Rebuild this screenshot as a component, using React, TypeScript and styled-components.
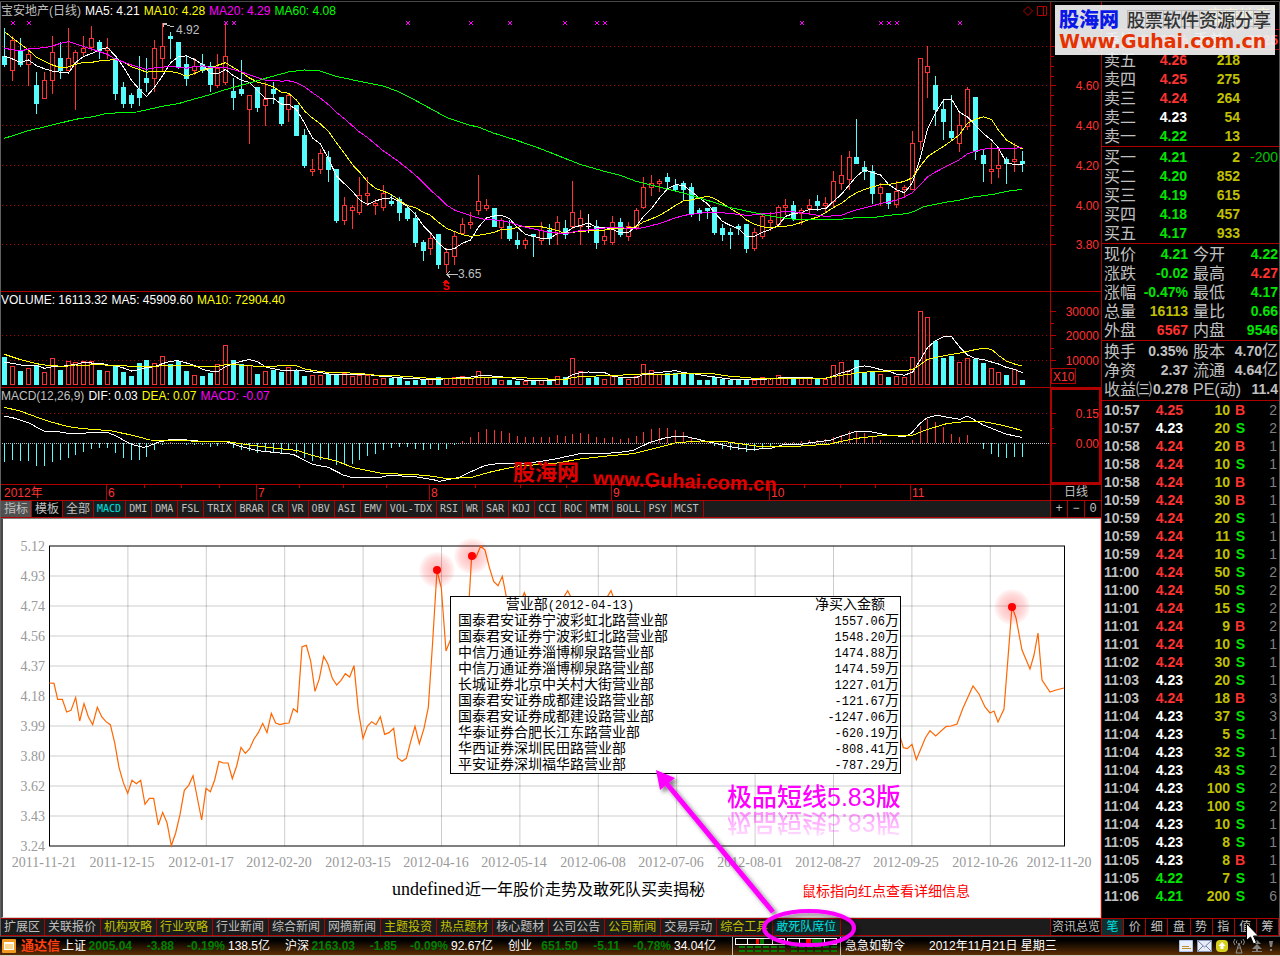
import React from "react";
import styled, { createGlobalStyle } from "styled-components";

const RED = "#ff3232";
const LINE = "#b00000";
const GREEN = "#00e600";
const YELLOW = "#c0c000";
const GREY = "#c0c0c0";
const CYAN = "#54fcfc";
const SANS = `"Liberation Sans", "Noto Sans CJK SC", sans-serif`;
const MONO = `"Liberation Mono", "Noto Sans CJK SC", monospace`;
const SERIF = `"Liberation Serif", "Noto Sans CJK SC", serif`;

const GlobalStyle = createGlobalStyle`
  * { box-sizing: border-box; }
  body { margin: 0; background: #000; font-family: ${SANS}; font-size: 12px; color: ${GREY}; }
  button { font: inherit; color: inherit; background: none; border: 0; padding: 0; margin: 0; cursor: pointer; }
  table { border-collapse: collapse; border-spacing: 0; }
  td, th { padding: 0; font-weight: inherit; text-align: left; }
  svg { display: block; }
`;

/* ---------- market data: screen levels in thirds of a pixel ---------- */

const CANDLES =
  "d84,168,195,201 u108,121,212,243 d114,150,195,201 u150,163,194,258 d216,255,312,342 u216,240,298,298 u108,157,242,281 d127,174,212,237 u84,175,212,212 u150,157,188,330 u108,145,158,170 u78,115,145,152 d120,126,152,177 u114,145,152,177 d174,175,282,300 d246,261,312,324 d279,285,312,324 d168,267,293,318 d174,234,249,276 u120,145,236,276 u69,139,176,212 d96,108,117,177 d126,126,200,207 d168,192,237,258 u175,199,212,224 d162,192,213,219 d186,198,255,276 u162,206,257,264 u72,169,248,255 d233,273,293,330 d180,267,282,288 u285,286,329,432 d261,261,324,336 u246,298,318,378 d246,267,282,312 d291,291,372,378 u282,286,329,366 d315,315,408,408 d387,405,498,504 u477,508,515,528 u447,460,510,522 d453,471,510,546 d507,507,663,669 u591,616,662,675 u615,622,632,687 u531,586,638,645 u531,580,587,618 u597,610,617,645 u555,580,623,633 d585,603,612,618 d591,597,639,663 d615,624,657,663 d636,654,729,741 d720,726,753,783 u697,715,746,765 d702,702,795,807 u745,757,794,820 u697,709,770,795 u654,672,703,705 u636,667,674,687 u525,604,632,645 u597,616,626,633 d624,624,681,681 u654,661,685,717 d660,678,717,723 d696,720,735,747 u714,721,734,747 d702,702,711,771 u666,691,722,735 d672,690,717,735 u648,667,703,735 d660,684,705,717 u543,637,680,687 u630,655,680,735 w642,678,681,699 d660,678,729,747 u684,709,722,735 u648,667,728,735 d654,666,705,711 u666,679,710,723 u624,631,685,690 u531,562,623,627 u525,550,563,588 u537,544,551,576 d519,531,546,570 d537,555,570,573 d543,549,570,603 d549,561,643,651 d624,630,641,663 d624,624,633,657 d621,621,699,705 d672,684,705,723 d684,696,705,747 d672,678,687,705 d672,672,747,759 u684,697,746,753 u645,649,710,717 u636,661,668,693 u615,622,674,681 u597,616,622,645 d603,615,657,663 u624,631,643,675 u597,616,628,645 d585,603,618,633 u591,610,617,639 u513,544,605,621 u465,526,551,570 u453,472,539,570 d357,471,492,492 d483,501,516,540 d495,513,582,612 u549,562,581,618 d579,579,612,627 u543,574,616,624 u555,562,569,594 u393,430,569,569 u175,175,425,450 u138,199,218,294 d228,255,330,378 d303,327,366,420 d285,393,414,423 u333,376,431,456 u261,268,382,390 d291,291,456,480 d447,465,492,546 u429,508,515,552 u447,496,508,534 d471,477,492,552 u429,478,485,516 d453,483,492,516"
    .split(" ")
    .map((s) => {
      const [high, top, bottom, low] = s.slice(1).split(",").map(Number);
      return { kind: s[0], high, top, bottom, low };
    });

const VOLUMES = [
  216, 243, 258, 249, 240, 261, 219, 255, 228, 231, 228, 228, 255, 258, 243, 261, 273, 234, 225, 234, 213, 237, 228, 258, 270, 273, 264, 237, 180, 225, 237, 240, 267, 258, 255, 260, 246, 255, 273, 270, 270, 267, 267, 264, 273, 270, 270, 282, 279, 279, 277, 288, 284, 285,
  282, 276, 279, 276, 273, 278, 258, 276, 282, 285, 285, 288, 288, 286, 286, 289, 273, 276, 219, 258, 279, 275, 282, 273, 278, 282, 272, 237, 255, 267, 264, 263, 266, 268, 285, 285, 276, 282, 284, 284, 285, 284, 276, 279, 270, 280, 280, 280, 280, 282, 282, 240, 231, 255,
  225, 262, 260, 267, 276, 273, 276, 216, 78, 96, 168, 219, 213, 231, 219, 222, 234, 249, 261, 270, 252, 285,
];

const HISTOGRAM = [
  531, 525, 528, 528, 543, 543, 531, 525, 519, 510, 501, 492, 489, 489, 504, 519, 525, 525, 516, 495, 480, 472, 475, 480, 480, 480, 486, 484, 475, 489, 495, 498, 504, 501, 501, 504, 495, 504, 519, 528, 525, 525, 540, 540, 537, 525, 513, 507, 495, 489, 486, 486, 492, 495,
  492, 495, 492, 480, 467, 456, 441, 432, 435, 438, 444, 453, 456, 456, 456, 456, 450, 453, 447, 444, 447, 456, 459, 456, 462, 459, 453, 441, 432, 429, 429, 435, 441, 456, 468, 472, 483, 492, 495, 495, 501, 498, 489, 483, 478, 471, 471, 468, 465, 465, 462, 456, 450, 438,
  438, 444, 456, 465, 475, 475, 475, 465, 423, 402, 411, 426, 447, 456, 450, 475, 492, 507, 516, 519, 516, 516,
];

const MA60 =
  "13,415 85,392 157,375 226,358 274,351 322,340 410,336 487,319 535,311 583,297 631,284 676,269 748,249 796,235 865,216 913,210 961,213 1009,229 1078,244 1150,258 1198,276 1246,301 1290,325 1339,352 1411,376 1435,381 1480,399 1550,421 1624,447 1740,493 1813,514 1861,526 1906,543 2050,579 2119,600 2191,623 2263,638 2320,650 2400,660 2530,657 2569,653 2625,652 2665,646 2720,641 2740,635 2770,620 2830,608 2880,600 2920,591 2980,583 3020,574 3067,568";
const DIF =
  "13,393 37,398 85,413 133,439 181,441 205,445 250,445 274,442 322,442 346,452 394,478 430,487 445,484 470,473 511,463 540,463 595,468 680,471 724,485 772,497 880,508 937,538 985,547 1030,570 1054,577 1140,578 1165,571 1246,575 1300,584 1317,589 1375,578 1400,566 1456,541 1500,535 1590,534 1660,523 1740,506 1820,505 1860,502 1900,496 1950,472 2002,457 2050,453 2090,462 2145,475 2200,487 2245,493 2263,493 2315,489 2350,479 2404,478 2430,473 2490,466 2520,455 2565,440 2610,440 2660,450 2715,455 2734,445 2760,415 2782,398 2810,391 2880,403 2902,393 2950,420 3017,447 3065,457";
const DEA =
  "13,367 60,378 109,396 157,412 205,425 250,431 330,437 394,450 450,465 690,471 748,480 830,490 890,496 940,512 1009,528 1060,548 1150,566 1235,568 1300,574 1340,581 1415,577 1475,560 1555,543 1660,536 1740,522 1820,513 1900,506 1980,486 2030,473 2100,468 2170,469 2220,476 2280,485 2390,484 2490,477 2520,470 2570,460 2640,452 2735,452 2780,434 2840,416 2900,409 2950,410 3000,419 3065,436";
const YEAR_LINE =
  "148,489 162,490 173,538 187,538 200,576 213,571 227,533 239,603 252,551 265,590 278,614 292,562 305,590 318,605 331,614 344,668 357,742 370,788 383,820 396,781 409,791 422,781 435,853 448,835 461,835 475,915 488,877 501,908 514,977 527,939 540,884 553,811 566,796 579,767 592,834 605,900 618,805 631,815 644,780 657,724 670,729 684,729 697,776 710,738 723,682 736,700 749,686 762,657 775,638 788,610 801,638 814,580 827,609 840,614 854,610 867,609 880,566 892,576 906,380 919,376 932,423 945,514 958,476 971,409 984,433 997,475 1010,495 1023,481 1036,461 1049,471 1062,437 1075,571 1089,655 1102,619 1115,605 1128,614 1141,590 1154,643 1167,638 1181,625 1193,714 1206,724 1219,715 1232,665 1245,619 1258,671 1272,625 1285,562 1298,365 1311,151 1324,204 1338,393 1351,360 1390,420 1402,320 1408,228 1415,107 1428,112 1442,78 1455,90 1468,142 1481,184 1494,197 1507,169 1520,235 1560,250 1573,218 1586,250 1680,250 1703,212 1722,250 1810,250 1833,212 1850,260 2300,500 2690,600 2702,655 2710,683 2722,686 2736,673 2749,719 2776,654 2790,632 2807,648 2838,620 2853,618 2871,612 2889,564 2904,531 2919,498 2937,522 2955,561 2970,579 2982,573 2994,606 3012,567 3036,260 3048,294 3066,390 3090,447 3102,405 3114,339 3126,480 3150,516 3168,510 3192,504";

const candleX = (i: number) => 3 + Math.ceil((71 * i) / 9);

const toPoints = (src: string, dx: number, dy: number) =>
  src
    .split(" ")
    .map((p) => {
      const [x, y] = p.split(",").map(Number);
      return `${x / 3 + dx},${y / 3 + dy}`;
    })
    .join(" ");

const average = (values: number[], n: number, lead: number[]) =>
  values.map((_, i) =>
    i < n - 1 ? lead[i] : values.slice(i - n + 1, i + 1).reduce((a, b) => a + b, 0) / n
  );

const seriesPoints = (values: number[], dy: number) =>
  values.map((v, i) => `${candleX(i) + 0.5},${v / 3 + dy}`).join(" ");

const CLOSES = CANDLES.map((c) => (c.kind === "u" ? c.top : c.bottom));
const MA5 = average(CLOSES, 5, [168, 177, 187, 180]);
const MA10 = average(CLOSES, 10, [95, 114, 132, 150, 172, 184, 195, 203, 201]);
const MA20 = average(CLOSES, 20, [145, 149, 153, 147, 145, 143, 138, 130, 125, 131, 140, 147, 155, 163, 178, 186, 195, 202, 208]);
const VMA5 = average(VOLUMES, 5, [232, 235, 240, 243]);
const VMA10 = average(VOLUMES, 10, [208, 216, 224, 230, 236, 240, 241, 244, 243]);

/* ---------- shell ---------- */

const Page = styled.div`
  position: relative;
  display: flex;
  flex-direction: column;
  min-width: 1280px;
  padding-top: 1px;
  background: #000;
  overflow: hidden;
`;
const Workspace = styled.div`
  display: flex;
  align-items: stretch;
  border-top: 1px solid #484848;
`;
const Main = styled.main`
  flex: 1;
  min-width: 0;
  display: flex;
  flex-direction: column;
  border-left: 1px solid #606060;
`;
const Pane = styled.section`
  display: grid;
  grid-template-columns: 1fr 51px;
  border-bottom: 1px solid ${LINE};
`;
const Plot = styled.div`
  min-width: 0;
  overflow: hidden;
`;
const PaneHead = styled.header<{ $h: number }>`
  display: flex;
  align-items: center;
  gap: 4px;
  height: ${(p) => p.$h}px;
  padding-right: 3px;
  white-space: nowrap;
  line-height: 16px;
`;
const HeadIcons = styled.span`
  margin-left: auto;
`;
const Tone = styled.span<{ $c: string }>`
  color: ${(p) => p.$c};
`;
const Axis = styled.div<{ $strong?: boolean }>`
  border-left: 1px solid ${LINE};
  ${(p) => p.$strong && `outline: 2px solid ${LINE}; outline-offset: -2px;`}
`;
const AxisCaption = styled.div`
  display: flex;
  align-items: center;
  justify-content: center;
  border-left: 1px solid ${LINE};
  line-height: 15px;
`;
const SvgText = styled.text<{ $size?: number; $serif?: boolean }>`
  font-family: ${(p) => (p.$serif ? SERIF : SANS)};
  font-size: ${(p) => p.$size ?? 12}px;
`;

/* ---------- candlestick, volume and MACD panes ---------- */

const Dots = ({ y }: { y: number }) => (
  <line x1="1" x2="100%" y1={y + 0.5} y2={y + 0.5} stroke="#b00000" strokeDasharray="1 3" />
);
const Curve = ({ points, color }: { points: string; color: string }) => (
  <polyline points={points} fill="none" stroke={color} shapeRendering="crispEdges" />
);

const CROSSES = [13, 29, 226, 234, 408, 471, 510, 565, 597, 605, 802, 881, 889, 897, 960];

const PricePlot = () => (
  <svg width="100%" height="271" shapeRendering="crispEdges" role="img" aria-label="日线">
    <g transform="translate(0,-20)">
      {[46, 85, 125, 165, 205, 244].map((y) => <Dots key={y} y={y} />)}
      {CROSSES.map((x) => (
        <path key={x} d={`M${x - 3},21l4,4m0,-4l-4,4`} stroke="#ff00ff" strokeWidth="1" shapeRendering="auto" />
      ))}
      {CANDLES.map((c, i) => {
        const x = candleX(i);
        const high = Math.round(c.high / 3);
        const top = Math.floor(c.top / 3);
        const bottom = Math.max(Math.round(c.bottom / 3), top + 1);
        const low = Math.max(Math.round(c.low / 3), bottom);
        if (c.kind === "u") {
          return (
            <g key={i} stroke={RED} fill="none">
              {top > high && <line x1={x + 0.5} x2={x + 0.5} y1={high} y2={top} />}
              {low > bottom && <line x1={x + 0.5} x2={x + 0.5} y1={bottom} y2={low} />}
              <rect x={x - 1.5} y={top + 0.5} width="4" height={Math.max(bottom - top - 1, 2)} />
            </g>
          );
        }
        const fill = c.kind === "w" ? "#fff" : CYAN;
        return (
          <g key={i} fill={fill}>
            <rect x={x} y={high} width="1" height={low - high} />
            <rect x={x - 2} y={top} width="5" height={bottom - top} />
          </g>
        );
      })}
      <Curve points={seriesPoints(MA5, 0)} color="#fff" />
      <Curve points={seriesPoints(MA10, 0)} color="#ffff00" />
      <Curve points={seriesPoints(MA20, 0)} color="#ff00ff" />
      <Curve points={toPoints(MA60, -1, 0)} color="#00ff00" />
      <path d="M173,27L162,24M162,27v-4h4" stroke={GREY} fill="none" />
      <SvgText x="175" y="34" fill={GREY}>4.92</SvgText>
      <path d="M457,274.5h-11M449,271l-3,3.5l3,3" stroke={GREY} fill="none" />
      <SvgText x="457" y="278" fill={GREY}>3.65</SvgText>
      <path d="M442,283l3,-4l3,4z" fill="#ff0000" />
      <SvgText x="442" y="290" fill="#ff0000" fontWeight="bold" $size={10}>S</SvgText>
    </g>
  </svg>
);

const AxisScale = ({ height, labels, ticks }: { height: number; labels: [number, string][]; ticks: number[] }) => (
  <svg width="50" height={height}>
    {ticks.map((y) => <line key={y} x1="0" x2="3" y1={y + 0.5} y2={y + 0.5} stroke={LINE} />)}
    {labels.map(([y, t]) => (
      <g key={t}>
        <line x1="0" x2="5" y1={y + 0.5} y2={y + 0.5} stroke={LINE} />
        <SvgText x="48" y={y + 5} textAnchor="end" fill={RED}>{t}</SvgText>
      </g>
    ))}
  </svg>
);

const VolumePlot = () => (
  <svg width="100%" height="79" shapeRendering="crispEdges">
    <Dots y={27} />
    <Dots y={52} />
    {VOLUMES.map((v, i) => {
      const x = candleX(i);
      const top = Math.round(v / 3) - 23;
      return CANDLES[i].kind === "u" ? (
        <rect key={i} x={x - 1.5} y={top + 0.5} width="4" height={76 - top} fill="none" stroke={RED} />
      ) : (
        <rect key={i} x={x - 2} y={top} width="5" height={77 - top} fill={CYAN} />
      );
    })}
    <Curve points={seriesPoints(VMA5, -23)} color="#fff" />
    <Curve points={seriesPoints(VMA10, -23)} color="#ffff00" />
  </svg>
);

const MacdPlot = () => (
  <svg width="100%" height="80" shapeRendering="crispEdges">
    <Dots y={9} />
    <line x1="1" x2="100%" y1="39.5" y2="39.5" stroke={GREY} strokeDasharray="1 1" />
    {HISTOGRAM.map((v, i) => {
      const end = Math.round(v / 3) - 119;
      const x = candleX(i);
      return end < 39 ? (
        <rect key={i} x={x} y={end} width="1" height={39 - end} fill={RED} />
      ) : (
        <rect key={i} x={x} y="39" width="1" height={end - 39} fill={CYAN} />
      );
    })}
    <Curve points={toPoints(DIF, -1, -119)} color="#fff" />
    <Curve points={toPoints(DEA, -1, -119)} color="#ffff00" />
  </svg>
);

const MONTHS: [number, string][] = [[105, "6"], [255, "7"], [428, "8"], [610, "9"], [768, "10"], [909, "11"]];

const Timeline = () => (
  <svg width="100%" height="15" shapeRendering="crispEdges">
    <SvgText x="3" y="12" fill={RED}>2012年</SvgText>
    {MONTHS.map(([x, t]) => (
      <g key={t}>
        <line x1={x + 0.5} x2={x + 0.5} y1="0" y2="15" stroke={LINE} />
        <SvgText x={x + 2} y="12" fill={RED}>{t}</SvgText>
      </g>
    ))}
    {[143, 180, 218, 298, 342, 385, 474, 519, 565, 650, 690, 730, 803, 839, 874].map((x) => (
      <line key={x} x1={x + 0.5} x2={x + 0.5} y1="0" y2="3" stroke={LINE} />
    ))}
  </svg>
);

/* ---------- tab strips ---------- */

const TabStrip = styled.nav`
  display: flex;
  height: 17px;
  background: #1c1c1c;
  border-bottom: 1px solid ${LINE};
`;
const IndicatorTab = styled.button<{ $wide?: boolean; $bg?: string; $c?: string }>`
  padding: 0 ${(p) => (p.$wide ? 3 : 4)}px 0 3px;
  border-right: 1px solid ${LINE};
  background: ${(p) => p.$bg ?? "#1c1c1c"};
  color: ${(p) => p.$c ?? GREY};
  font-family: ${(p) => (p.$wide ? SANS : `"DejaVu Sans Mono", monospace`)};
  font-size: ${(p) => (p.$wide ? 12 : 10)}px;
  line-height: 16px;
  white-space: nowrap;
`;
const ZoomKeys = styled.div`
  display: grid;
  grid-template-columns: repeat(3, 1fr);
  width: 51px;
  margin-left: auto;
  background: #000;
`;
const ZoomKey = styled.button`
  border-left: 1px solid ${LINE};
  line-height: 15px;
  font-family: ${MONO};
  font-size: 12px;
`;
const NewsStrip = styled(TabStrip)`
  height: 18px;
  border-top: 1px solid ${LINE};
`;
const NewsTab = styled.button<{ $tone?: "hot" | "on" }>`
  padding: 0 4px 0 3px;
  border-right: 1px solid ${LINE};
  background: ${(p) => (p.$tone === "on" ? "#102828" : "#1c1c1c")};
  color: ${(p) => (p.$tone === "hot" ? YELLOW : p.$tone === "on" ? "#00e0e0" : GREY)};
  line-height: 16px;
  white-space: nowrap;
`;
const OverviewTab = styled(NewsTab)`
  margin-left: auto;
  padding: 0 1px;
  border-left: 1px solid ${LINE};
  border-right: 0;
  background: #000;
`;

const INDICATORS = "MACD DMI DMA FSL TRIX BRAR CR VR OBV ASI EMV VOL-TDX RSI WR SAR KDJ CCI ROC MTM BOLL PSY MCST".split(" ");
const NEWS: [string, ("hot" | "on")?][] = [
  ["扩展区"], ["关联报价"], ["机构攻略", "hot"], ["行业攻略", "hot"], ["行业新闻"], ["综合新闻"], ["网摘新闻"],
  ["主题投资", "hot"], ["热点题材", "hot"], ["核心题材"], ["公司公告"], ["公司新闻", "hot"], ["交易异动"],
  ["综合工具", "hot"], ["敢死队席位", "on"],
];

/* ---------- year chart ---------- */

const Report = styled.section`
  position: relative;
  height: 400px;
  background: #fff;
  border-style: solid;
  border-width: 1px 1px 1px 2px;
  border-color: #808080 #d4d0c8 #d4d0c8 #484848;
  overflow: hidden;
`;
const Popup = styled.div`
  position: absolute;
  left: 447px;
  top: 77px;
  width: 451px;
  padding-left: 7px;
  background: #fff;
  border: 1px solid #000;
  color: #000;
`;
const SeatTable = styled.table`
  width: 100%;
  font-family: ${MONO};
  font-size: 14px;
  line-height: 16px;
  td, th { height: 16px; white-space: nowrap; }
  th:first-child { width: 224px; text-align: center; }
  th:last-child { text-align: right; padding-right: 15px; }
  td:last-child { text-align: right; padding-right: 1px; }
`;
const Latin = styled.span`
  font-size: 12px;
  line-height: 1px;
`;
const Promo = styled.div`
  position: absolute;
  left: 724px;
  top: 263px;
  color: #ff00ff;
  font: 500 25px/26px "Noto Sans CJK SC", sans-serif;
  white-space: nowrap;
  -webkit-box-reflect: below 4px linear-gradient(rgba(0, 0, 0, 0.1), rgba(0, 0, 0, 0.45));
`;
const PromoDigits = styled.span`
  font-family: ${SANS};
  line-height: 1px;
`;

const SEATS: [string, string][] = [
  ["国泰君安证券宁波彩虹北路营业部", "1557.06"],
  ["国泰君安证券宁波彩虹北路营业部", "1548.20"],
  ["中信万通证券淄博柳泉路营业部", "1474.88"],
  ["中信万通证券淄博柳泉路营业部", "1474.59"],
  ["长城证券北京中关村大街营业部", "1227.01"],
  ["国泰君安证券成都建设路营业部", "-121.67"],
  ["国泰君安证券成都建设路营业部", "-1247.06"],
  ["华泰证券合肥长江东路营业部", "-620.19"],
  ["华西证券深圳民田路营业部", "-808.41"],
  ["平安证券深圳福华路营业部", "-787.29"],
];
const LEVELS = ["5.12", "4.93", "4.74", "4.56", "4.37", "4.18", "3.99", "3.80", "3.62", "3.43", "3.24"];
const DATES = ["2011-11-21", "2011-12-15", "2012-01-17", "2012-02-20", "2012-03-15", "2012-04-16", "2012-05-14", "2012-06-08", "2012-07-06", "2012-08-01", "2012-08-27", "2012-09-25", "2012-10-26"];

const YearChart = () => (
  <svg width="100%" height="398">
    <defs>
      <radialGradient id="halo">
        <stop offset="0.2" stopColor="#f00" stopOpacity="0.25" />
        <stop offset="0.7" stopColor="#f00" stopOpacity="0.14" />
        <stop offset="1" stopColor="#f00" stopOpacity="0.02" />
      </radialGradient>
    </defs>
    <g transform="translate(-3,-519)">
      {LEVELS.slice(1, -1).map((t, i) => (
        <line key={t} x1="50" x2="1064" y1={576 + i * 30} y2={576 + i * 30} stroke="#000" strokeOpacity="0.2" />
      ))}
      {DATES.slice(1).map((t, i) => (
        <line key={t} x1={49.5 + (i + 1) * 78.4} x2={49.5 + (i + 1) * 78.4} y1="546" y2="846" stroke="#000" strokeOpacity="0.2" />
      ))}
      <rect x="49.5" y="546" width="1015" height="300" fill="none" stroke="#000" />
      {LEVELS.map((t, i) => (
        <SvgText key={t} $serif $size={14} x="45" y={551 + i * 30} textAnchor="end" fill="#999">{t}</SvgText>
      ))}
      {DATES.map((t, i) => (
        <SvgText key={t} $serif $size={14} x={Math.round(44 + i * 78.4)} y="867" textAnchor="middle" fill="#999">{t}</SvgText>
      ))}
      <SvgText $serif $size={14} x="1059" y="867" textAnchor="middle" fill="#999">2012-11-20</SvgText>
      <polyline points={toPoints(YEAR_LINE, 0, 520)} fill="none" stroke="#ff6600" strokeWidth="1.2" />
      {[[437, 570], [472, 556], [1012, 607]].map(([x, y]) => (
        <g key={x}>
          <circle cx={x} cy={y} r="18" fill="url(#halo)" />
          <circle cx={x} cy={y} r="4" fill="#f00" />
        </g>
      ))}
      <SvgText $serif $size={18} x="392" y="895" fill="#000">undefined</SvgText>
      <SvgText $size={16} x="465" y="895" fill="#000">近一年股价走势及敢死队买卖揭秘</SvgText>
      <SvgText $size={14} x="802" y="896" fill="#f00">鼠标指向红点查看详细信息</SvgText>
    </g>
  </svg>
);

/* ---------- quote sidebar ---------- */

const Sidebar = styled.aside`
  flex: none;
  display: flex;
  flex-direction: column;
  width: 179px;
  border-left: 1px solid ${LINE};
  border-right: 1px solid #585858;
`;
const QuoteTitle = styled.h1`
  margin: 0;
  height: 28px;
  padding: 0 8px;
  border-bottom: 1px solid ${LINE};
  color: #ffff00;
  font-size: 16px;
  font-weight: normal;
  line-height: 27px;
  text-align: right;
`;
const Block = styled.div<{ $bottom?: number }>`
  padding: 1px 1px ${(p) => p.$bottom ?? 0}px 2px;
  border-bottom: 1px solid ${LINE};
`;
const QuoteTable = styled.table<{ $row: number }>`
  width: 100%;
  table-layout: fixed;
  font-size: 14px;
  font-weight: bold;
  line-height: ${(p) => p.$row}px;
  td, th { height: ${(p) => p.$row}px; white-space: nowrap; }
`;
const Label = styled.th<{ $w?: number }>`
  width: ${(p) => p.$w ?? 32}px;
  font-size: 16px;
  font-weight: normal;
  color: ${GREY};
`;
const Num = styled.td<{ $c?: string; $w?: number; $thin?: boolean; $left?: boolean }>`
  width: ${(p) => (p.$w ? `${p.$w}px` : "auto")};
  color: ${(p) => p.$c ?? GREY};
  font-weight: ${(p) => (p.$thin ? "normal" : "bold")};
  ${(p) => !p.$left && "text-align: right;"}
`;
const SecondLabel = styled(Label)`
  width: 37px;
  padding-left: 5px;
`;
const Unit = styled.span`
  font-size: 16px;
  font-weight: normal;
  line-height: 1px;
`;
const SideTabs = styled.nav`
  display: grid;
  grid-template-columns: repeat(8, 1fr);
  height: 18px;
  margin-top: auto;
  border-top: 1px solid ${LINE};
  border-bottom: 1px solid ${LINE};
`;
const SideTab = styled.button<{ $on?: boolean }>`
  border-right: 1px solid ${LINE};
  background: ${(p) => (p.$on ? "#103030" : "#000")};
  color: ${(p) => (p.$on ? "#00e0e0" : GREY)};
  line-height: 16px;
`;

const ASKS = [["卖五", "4.26", RED, "218"], ["卖四", "4.25", RED, "275"], ["卖三", "4.24", RED, "264"], ["卖二", "4.23", "#fff", "54"], ["卖一", "4.22", GREEN, "13"]];
const BIDS = [["买一", "4.21", GREEN, "2", "-200"], ["买二", "4.20", GREEN, "852"], ["买三", "4.19", GREEN, "615"], ["买四", "4.18", GREEN, "457"], ["买五", "4.17", GREEN, "933"]];
const STATS = [
  ["现价", "4.21", GREEN, "今开", "4.22", GREEN],
  ["涨跌", "-0.02", GREEN, "最高", "4.27", RED],
  ["涨幅", "-0.47%", GREEN, "最低", "4.17", GREEN],
  ["总量", "16113", YELLOW, "量比", "0.66", GREEN],
  ["外盘", "6567", RED, "内盘", "9546", GREEN],
];
const FUNDAMENTALS = [
  ["换手", "0.35%", GREY, "股本", "4.70亿", GREY],
  ["净资", "2.37", GREY, "流通", "4.64亿", GREY],
  ["收益㈢", "0.278", GREY, "PE(动)", "11.4", GREY],
];
const TICKS =
  "10:57 4.25 10 B 2|10:57 4.23 20 S 2|10:58 4.24 20 B 1|10:58 4.24 10 S 1|10:58 4.24 10 B 1|10:59 4.24 30 B 1|10:59 4.24 20 S 1|10:59 4.24 11 S 1|10:59 4.24 10 S 1|11:00 4.24 50 S 2|11:00 4.24 50 S 2|11:01 4.24 15 S 2|11:01 4.24 9 B 2|11:01 4.24 10 S 1|11:02 4.24 30 S 1|11:03 4.23 20 S 1|11:03 4.24 18 B 3|11:04 4.23 37 S 3|11:04 4.23 5 S 1|11:04 4.23 32 S 1|11:04 4.23 43 S 2|11:04 4.23 100 S 2|11:04 4.23 100 S 2|11:04 4.23 10 S 1|11:05 4.23 8 S 1|11:05 4.23 8 B 1|11:05 4.22 7 S 1|11:06 4.21 200 S 6"
    .split("|")
    .map((r) => r.split(" "));
const priceColor = (p: string) => (p > "4.23" ? RED : p < "4.23" ? GREEN : "#fff");

const Depth = ({ rows }: { rows: string[][] }) => (
  <Block>
    <QuoteTable $row={19}>
      <tbody>
        {rows.map(([name, price, color, size, delta]) => (
          <tr key={name}>
            <Label scope="row" $w={40}>{name}</Label>
            <Num $w={43} $c={color}>{price}</Num>
            <Num $w={53} $c={YELLOW}>{size}</Num>
            <Num $c="#00c000" $thin>{delta}</Num>
          </tr>
        ))}
      </tbody>
    </QuoteTable>
  </Block>
);

const Figures = ({ rows, bottom }: { rows: string[][]; bottom?: number }) => (
  <Block $bottom={bottom}>
    <QuoteTable $row={19}>
      <tbody>
        {rows.map(([a, av, ac, b, bv, bc]) => (
          <tr key={a}>
            <Label scope="row">{a}</Label>
            <Num $w={52} $c={ac}>{av}</Num>
            <SecondLabel scope="row">{b}</SecondLabel>
            <Num $c={bc}>{bv.replace("亿", "")}{bv.endsWith("亿") && <Unit>亿</Unit>}</Num>
          </tr>
        ))}
      </tbody>
    </QuoteTable>
  </Block>
);

const TickBlock = styled.div`
  padding: 0 2px 12px;
`;
const OrderBalance = styled.div`
  height: 20px;
  overflow: hidden;
  border-bottom: 1px solid ${LINE};
`;

/* ---------- status bar ---------- */

const StatusBar = styled.footer`
  display: flex;
  align-items: center;
  height: 20px;
  border-top: 1px solid #484848;
  border-bottom: 1px solid #d4d0c8;
  background: linear-gradient(#000 20%, #5c2e04);
  color: #fff;
  line-height: 16px;
  white-space: nowrap;
`;
const Brand = styled.strong`
  width: 41px;
  margin: 0 0 0 4px;
  color: #ff4010;
  font-size: 13px;
`;
const IndexGroup = styled.div`
  display: grid;
  grid-template-columns: 24px 46px 42px 51px 45px;
  align-items: baseline;
  margin-right: 15px;
`;
const IndexValue = styled.span`
  color: #008000;
  font-weight: bold;
  text-align: right;
`;
const Amount = styled.span`
  text-align: right;
`;
const Meter = styled.div`
  margin-left: 1px;
  padding: 0 1px;
  border-left: 1px solid ${GREY};
  border-right: 1px solid ${GREY};
`;
const Motto = styled.span`
  width: 84px;
  margin-left: 4px;
`;
const Tray = styled.div`
  display: flex;
  align-items: center;
  gap: 4px;
  margin: 0 6px 0 auto;
`;

const INDEXES = [
  ["上证", "2005.04", "-3.88", "-0.19%", "138.5亿"],
  ["沪深", "2163.03", "-1.85", "-0.09%", "92.67亿"],
  ["创业", "651.50", "-5.11", "-0.78%", "34.04亿"],
];

const MeterDrawing = () => (
  <svg width="105" height="18" shapeRendering="crispEdges">
    {[1, 53].map((x) => (
      <g key={x}>
        <rect x={x + (x > 1 ? 19 : 21)} y="2" width={x > 1 ? 5 : 3} height="5" fill="#f00" />
        <rect x={x + 25} y="2" width={x > 1 ? 10 : 4} height="5" fill="#008000" />
        <path d={`M${x + 0.5},1.5h49v6h-49zM${x + 12.5},2v5M${x + 37.5},2v5`} stroke="#fff" fill="none" />
        <path d={`M${x + 4},10h46M${x + 4},14h46`} stroke="#008000" strokeWidth="2" strokeDasharray="6 2" />
      </g>
    ))}
  </svg>
);

/* ---------- overlays ---------- */

const SiteBadge = styled.a`
  position: absolute;
  top: 5px;
  right: 5px;
  width: 220px;
  height: 50px;
  padding: 3px 4px;
  background: rgba(245, 245, 245, 0.91);
  text-decoration: none;
`;
const BadgeTop = styled.div`
  display: flex;
  align-items: center;
  gap: 8px;
  height: 22px;
`;
const BadgeName = styled.span`
  color: #0a18e8;
  font: 900 20px/22px "Noto Sans CJK SC", sans-serif;
`;
const BadgeSlogan = styled.span`
  height: 18px;
  color: #333;
  font: 500 18px/18px "Noto Sans CJK SC", sans-serif;
  white-space: nowrap;
  background: repeating-linear-gradient(90deg, #bbb 0 1px, transparent 1px 9px),
    repeating-linear-gradient(#bbb 0 1px, transparent 1px 8px);
`;
const BadgeUrl = styled.div`
  color: #e63200;
  font: bold 19px/22px "DejaVu Sans", sans-serif;
  white-space: nowrap;
`;
const ChartMark = styled.div`
  position: absolute;
  left: 513px;
  top: 457px;
  display: flex;
  gap: 14px;
  color: #e00000;
  font: bold 22px/26px "Noto Sans CJK SC", sans-serif;
  white-space: nowrap;
  pointer-events: none;
`;
const ChartMarkUrl = styled.span`
  margin-top: 11px;
  font: bold 20px/26px ${SANS};
  transform: rotate(2deg);
`;
const Callout = styled.svg`
  position: absolute;
  left: 0;
  top: 0;
  pointer-events: none;
`;

export default function App() {
  return (
    <Page>
      <GlobalStyle />
      <Workspace>
        <Main>
          <Pane>
            <Plot>
              <PaneHead $h={18}>
                <span>宝安地产(日线)</span>
                <Tone $c="#fff">MA5: 4.21</Tone>
                <Tone $c="#ffff00">MA10: 4.28</Tone>
                <Tone $c="#ff00ff">MA20: 4.29</Tone>
                <Tone $c="#00ff00">MA60: 4.08</Tone>
                <HeadIcons>
                  <svg width="24" height="12" fill="none" stroke={LINE}>
                    <path d="M5,1.500L9.500,6L5,10.500L0.500,6z" />
                    <path d="M14.500,1.500h9v9h-9zM20.500,2v9" />
                  </svg>
                </HeadIcons>
              </PaneHead>
              <PricePlot />
            </Plot>
            <Axis>
              <AxisScale
                height={289}
                labels={[[44, "4.80"], [83, "4.60"], [123, "4.40"], [163, "4.20"], [203, "4.00"], [242, "3.80"]]}
                ticks={[54, 64, 74, 93, 103, 113, 133, 143, 153, 173, 183, 193, 213, 223, 233]}
              />
            </Axis>
          </Pane>
          <Pane>
            <Plot>
              <PaneHead $h={16}>
                <Tone $c="#fff">VOLUME: 16113.32</Tone>
                <Tone $c="#fff">MA5: 45909.60</Tone>
                <Tone $c="#ffff00">MA10: 72904.40</Tone>
              </PaneHead>
              <VolumePlot />
            </Plot>
            <Axis>
              <svg width="50" height="95">
                {[[19, "30000"], [43, "20000"], [68, "10000"]].map(([y, t]) => (
                  <g key={t}>
                    <line x1="0" x2="5" y1={Number(y) + 0.5} y2={Number(y) + 0.5} stroke={LINE} />
                    <SvgText x="48" y={Number(y) + 5} textAnchor="end" fill={RED}>{t}</SvgText>
                  </g>
                ))}
                {[31, 56, 80].map((y) => <line key={y} x1="0" x2="3" y1={y + 0.5} y2={y + 0.5} stroke={LINE} />)}
                <rect x="0.500" y="76.500" width="24" height="15" fill="#000" stroke={LINE} />
                <SvgText x="2" y="89" fill={RED}>X10</SvgText>
              </svg>
            </Axis>
          </Pane>
          <Pane>
            <Plot>
              <PaneHead $h={16}>
                <span>MACD(12,26,9)</span>
                <Tone $c="#fff">DIF: 0.03</Tone>
                <Tone $c="#ffff00">DEA: 0.07</Tone>
                <Tone $c="#ff00ff">MACD: -0.07</Tone>
              </PaneHead>
              <MacdPlot />
            </Plot>
            <Axis $strong>
              <AxisScale height={96} labels={[[25, "0.15"], [55, "0.00"]]} ticks={[40]} />
            </Axis>
          </Pane>
          <Pane>
            <Plot><Timeline /></Plot>
            <AxisCaption>日线</AxisCaption>
          </Pane>
          <TabStrip>
            <IndicatorTab $wide $bg="#505050">指标</IndicatorTab>
            <IndicatorTab $wide $bg="#000">模板</IndicatorTab>
            <IndicatorTab $wide>全部</IndicatorTab>
            {INDICATORS.map((t, i) => (
              <IndicatorTab key={t} $c={i === 0 ? "#00e0e0" : undefined} $bg={i === 0 ? "#102020" : undefined}>{t}</IndicatorTab>
            ))}
            <ZoomKeys>
              <ZoomKey>+</ZoomKey>
              <ZoomKey>−</ZoomKey>
              <ZoomKey>0</ZoomKey>
            </ZoomKeys>
          </TabStrip>
          <Report>
            <YearChart />
            <Popup>
              <SeatTable>
                <thead>
                  <tr>
                    <th>营业部<Latin>(2012-04-13)</Latin></th>
                    <th>净买入金额</th>
                  </tr>
                </thead>
                <tbody>
                  {SEATS.map(([name, sum], i) => (
                    <tr key={i}>
                      <td>{name}</td>
                      <td><Latin>{sum}</Latin>万</td>
                    </tr>
                  ))}
                </tbody>
              </SeatTable>
            </Popup>
            <Promo>极品短线<PromoDigits>5.83</PromoDigits>版</Promo>
          </Report>
          <NewsStrip>
            {NEWS.map(([t, tone]) => <NewsTab key={t} $tone={tone}>{t}</NewsTab>)}
            <OverviewTab>资讯总览</OverviewTab>
          </NewsStrip>
        </Main>

        <Sidebar>
          <QuoteTitle>宝安地产</QuoteTitle>
          <OrderBalance>
            <Figures rows={[["委比", "51.25%", RED, "委差", "8825", RED]]} />
          </OrderBalance>
          <Depth rows={ASKS} />
          <Depth rows={BIDS} />
          <Figures rows={STATS} />
          <Figures rows={FUNDAMENTALS} bottom={1} />
          <TickBlock>
            <QuoteTable $row={18}>
              <tbody>
                {TICKS.map(([time, price, size, side, count], i) => (
                  <tr key={i}>
                    <Num $left $w={40}>{time}</Num>
                    <Num $w={39} $c={priceColor(price)}>{price}</Num>
                    <Num $w={47} $c={YELLOW}>{size}</Num>
                    <Num $w={15} $c={side === "B" ? RED : GREEN}>{side}</Num>
                    <Num $c="#808080" $thin>{count}</Num>
                  </tr>
                ))}
              </tbody>
            </QuoteTable>
          </TickBlock>
          <SideTabs>
            {[..."笔价细盘势指值筹"].map((t, i) => <SideTab key={t} $on={i === 0}>{t}</SideTab>)}
          </SideTabs>
        </Sidebar>
      </Workspace>

      <StatusBar>
        <svg width="17" height="14">
          <rect x="2" y="0" width="14" height="14" rx="1" fill="#f09a20" />
          <rect x="4.500" y="3.500" width="9" height="7" fill="#ffd890" stroke="#fff" />
          <rect x="4" y="3" width="10" height="2" fill="#fff" />
        </svg>
        <Brand>通达信</Brand>
        {INDEXES.map(([name, value, change, pct, amount]) => (
          <IndexGroup key={name}>
            <span>{name}</span>
            <IndexValue>{value}</IndexValue>
            <IndexValue>{change}</IndexValue>
            <IndexValue>{pct}</IndexValue>
            <Amount>{amount}</Amount>
          </IndexGroup>
        ))}
        <Meter><MeterDrawing /></Meter>
        <Motto>急急如勒令</Motto>
        <span>2012年11月21日 星期三</span>
        <Tray>
          <svg width="14" height="12"><rect width="14" height="12" rx="1" fill="#e8f0ff" stroke="#7090d0" /><path d="M3,6.500h7M3,8.500h9" stroke="#c09030" /></svg>
          <svg width="15" height="12"><rect x="0.500" y="0.500" width="14" height="11" fill="#e8ecf8" stroke="#8898b8" /><path d="M1,1l6.500,6l6.500,-6M1,11l5,-5M14,11l-5,-5" fill="none" stroke="#7080a0" /></svg>
          <svg width="12" height="12"><rect width="12" height="12" rx="4" fill="#d8d020" /><path d="M6,2l3.500,4h-2v3h-3v-3h-2z" fill="#fff" /></svg>
          <svg width="14" height="16" fill="none" stroke="#909090"><path d="M7,5L4,15h6zM5.500,10h3M3,1q-3,3 0,6M11,1q3,3 0,6M5,2.500q-1.500,1.500 0,3M9,2.500q1.500,1.500 0,3" /></svg>
          <svg width="14" height="14" fill="#808080"><path d="M7,1l4,4h-8zM7,5l5,5h-10zM6,10h2v2h4v1h-10v-1h4z" /></svg>
          <svg width="6" height="12" fill="#808080"><path d="M1,1h4l-1,6h-2zM2,9h2v2h-2z" /></svg>
        </Tray>
      </StatusBar>

      <ChartMark>
        <span>股海网</span>
        <ChartMarkUrl>www.Guhai.com.cn</ChartMarkUrl>
      </ChartMark>
      <SiteBadge href="#guhai">
        <BadgeTop>
          <BadgeName>股海网</BadgeName>
          <BadgeSlogan>股票软件资源分享</BadgeSlogan>
        </BadgeTop>
        <BadgeUrl>Www.Guhai.com.cn</BadgeUrl>
      </SiteBadge>
      <Callout width="1280" height="956">
        <defs>
          <filter id="drop" x="-20%" y="-20%" width="140%" height="140%">
            <feDropShadow dx="3" dy="3" stdDeviation="2" floodOpacity="0.5" />
          </filter>
        </defs>
        <g filter="url(#drop)">
          <path d="M773,912L667,784" stroke="#ff00ff" strokeWidth="5" />
          <path d="M656,770l19,8l-15,12z" fill="#ff00ff" />
          <ellipse cx="809" cy="928" rx="45" ry="17" fill="none" stroke="#ff00ff" strokeWidth="4" />
        </g>
        <path d="M1246.500,923.500v17l4,-3.500l3,7l3,-1.500l-3,-6.500h5z" fill="#fff" stroke="#000" />
      </Callout>
    </Page>
  );
}
